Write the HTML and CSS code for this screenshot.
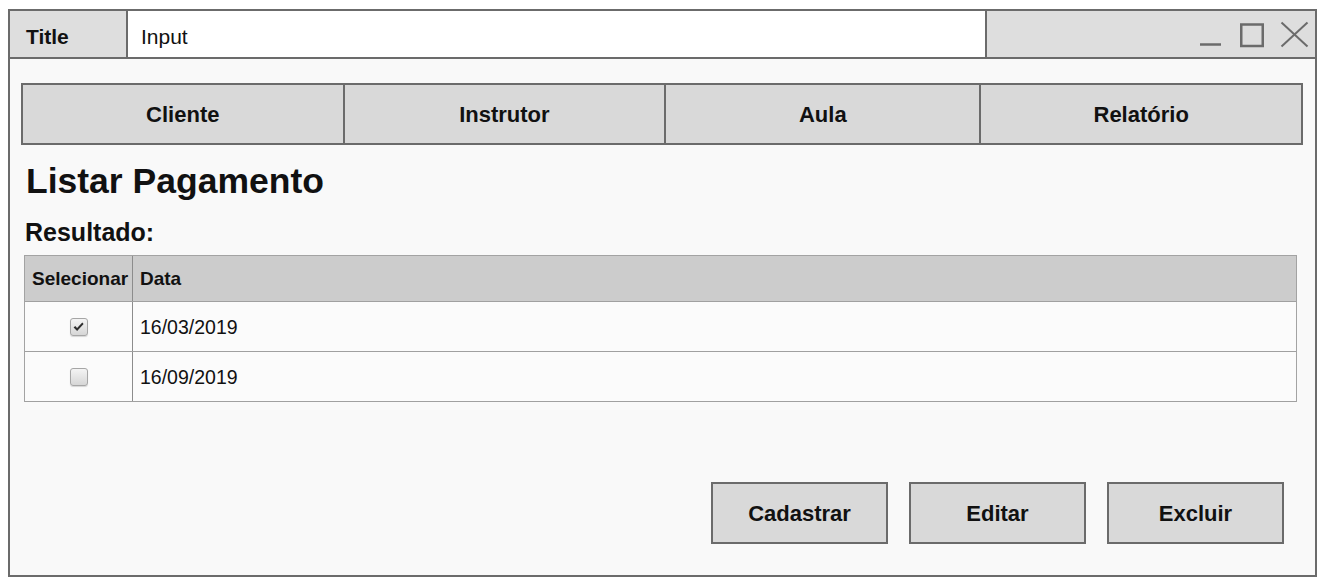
FILE: index.html
```html
<!DOCTYPE html>
<html lang="pt">
<head>
<meta charset="utf-8">
<title>Listar Pagamento</title>
<link rel="stylesheet" href="styles.css">
</head>
<body>
<div class="window">
  <div class="titlebar">
    <div class="tb-title">Title</div>
    <div class="tb-input">Input</div>
    <div class="tb-controls">
      <svg class="win-icons" width="112" height="46" viewBox="0 0 112 46" aria-hidden="true">
        <line x1="2" y1="33.5" x2="23" y2="33.5" stroke="#6b6b6b" stroke-width="2.5"/>
        <rect x="43.25" y="13.5" width="21.5" height="21.5" fill="none" stroke="#6b6b6b" stroke-width="2.5"/>
        <line x1="83.5" y1="11.5" x2="109.5" y2="35.5" stroke="#6b6b6b" stroke-width="2"/>
        <line x1="109.5" y1="11.5" x2="83.5" y2="35.5" stroke="#6b6b6b" stroke-width="2"/>
      </svg>
    </div>
  </div>
  <div class="content">
    <nav class="tabs">
      <div class="tab">Cliente</div>
      <div class="tab">Instrutor</div>
      <div class="tab tab-narrow">Aula</div>
      <div class="tab">Relatório</div>
    </nav>
    <h1 class="heading">Listar Pagamento</h1>
    <h2 class="label">Resultado:</h2>
    <div class="table">
      <div class="row row-head">
        <div class="cell cell-sel">Selecionar</div>
        <div class="cell cell-data">Data</div>
      </div>
      <div class="row">
        <div class="cell cell-sel cell-center"><span class="checkbox checked"><svg width="11" height="10" viewBox="0 0 11 10"><path d="M0.6 5.6 L2.2 4.1 L4.1 6 L9.3 0.6 L10.6 2 L4.1 8.9 Z" fill="#2e2e2e"/></svg></span></div>
        <div class="cell cell-data">16/03/2019</div>
      </div>
      <div class="row">
        <div class="cell cell-sel cell-center"><span class="checkbox"></span></div>
        <div class="cell cell-data">16/09/2019</div>
      </div>
    </div>
    <div class="actions">
      <button class="btn">Cadastrar</button>
      <button class="btn">Editar</button>
      <button class="btn">Excluir</button>
    </div>
  </div>
</div>
</body>
</html>
```

FILE: styles.css
```css
* { box-sizing: border-box; }

html, body {
  margin: 0;
  padding: 0;
  background: #ffffff;
}

body {
  font-family: "Liberation Sans", Arial, Helvetica, sans-serif;
  color: #111111;
  padding: 9px 0 0 8px;
}

.window {
  width: 1309px;
  height: 568px;
  border: 2px solid #6b6b6b;
  background: #f9f9f9;
  display: flex;
  flex-direction: column;
}

.titlebar {
  display: flex;
  height: 48px;
  border-bottom: 2px solid #6b6b6b;
  flex: 0 0 auto;
}

.tb-title {
  width: 118px;
  background: #dedede;
  border-right: 2px solid #6b6b6b;
  font-size: 21px;
  font-weight: bold;
  padding: 6px 0 0 16px;
  display: flex;
  align-items: center;
}

.tb-input {
  flex: 1 1 auto;
  background: #ffffff;
  border-right: 2px solid #6b6b6b;
  font-size: 21px;
  padding: 6px 0 0 13px;
  display: flex;
  align-items: center;
}

.tb-controls {
  width: 328px;
  background: #dedede;
  display: flex;
  justify-content: flex-end;
  align-items: center;
  padding-right: 5px;
}

.win-icons { display: block; }

.content {
  flex: 1 1 auto;
  display: flex;
  flex-direction: column;
  padding: 24px 12px 31px 11px;
}

.tabs {
  display: flex;
  height: 62px;
  border: 2px solid #6b6b6b;
  background: #d9d9d9;
}

.tab {
  flex: 1 1 0;
  display: flex;
  align-items: center;
  justify-content: center;
  font-size: 22px;
  font-weight: bold;
  padding-top: 2px;
  border-left: 2px solid #6b6b6b;
}

.tab:first-child { border-left: none; }
.tab-narrow { flex-grow: 0.98; }

.heading {
  margin: 17px 0 0 5px;
  font-size: 35.5px;
  line-height: 39px;
  font-weight: bold;
}

.label {
  margin: 17px 0 0 4px;
  font-size: 25px;
  line-height: 29px;
  font-weight: bold;
}

.table {
  margin: 8px 0 0 3px;
  width: 1273px;
  border: 1px solid #a3a3a3;
  border-bottom: none;
  background: #fbfbfb;
}

.row {
  display: grid;
  grid-template-columns: 108px 1fr;
  height: 50px;
  border-bottom: 1px solid #a0a0a0;
  font-size: 19.5px;
}

.row-head {
  height: 46px;
  background: #cccccc;
  font-weight: bold;
  font-size: 19px;
}

.cell {
  display: flex;
  align-items: center;
  padding-top: 1px;
}

.cell-sel {
  border-right: 1px solid #8c8c8c;
  padding-left: 7px;
}

.cell-center {
  justify-content: center;
  padding-left: 0;
}

.cell-data { padding-left: 7px; }

.checkbox {
  width: 18px;
  height: 18px;
  border: 1px solid #a6a6a6;
  border-radius: 3px;
  background: linear-gradient(#f4f4f4, #d6d6d6);
  box-shadow: 0 1px 1px rgba(0,0,0,0.15);
  display: flex;
  align-items: center;
  justify-content: center;
}

.checkbox svg { display: block; }

.actions {
  margin-top: auto;
  display: flex;
  justify-content: flex-end;
  gap: 21px;
  padding-right: 19px;
}

.btn {
  width: 177px;
  height: 62px;
  border: 2px solid #6b6b6b;
  background: #d9d9d9;
  font-family: "Liberation Sans", Arial, Helvetica, sans-serif;
  font-size: 22px;
  font-weight: bold;
  color: #111111;
  padding: 2px 0 0 0;
}
```
